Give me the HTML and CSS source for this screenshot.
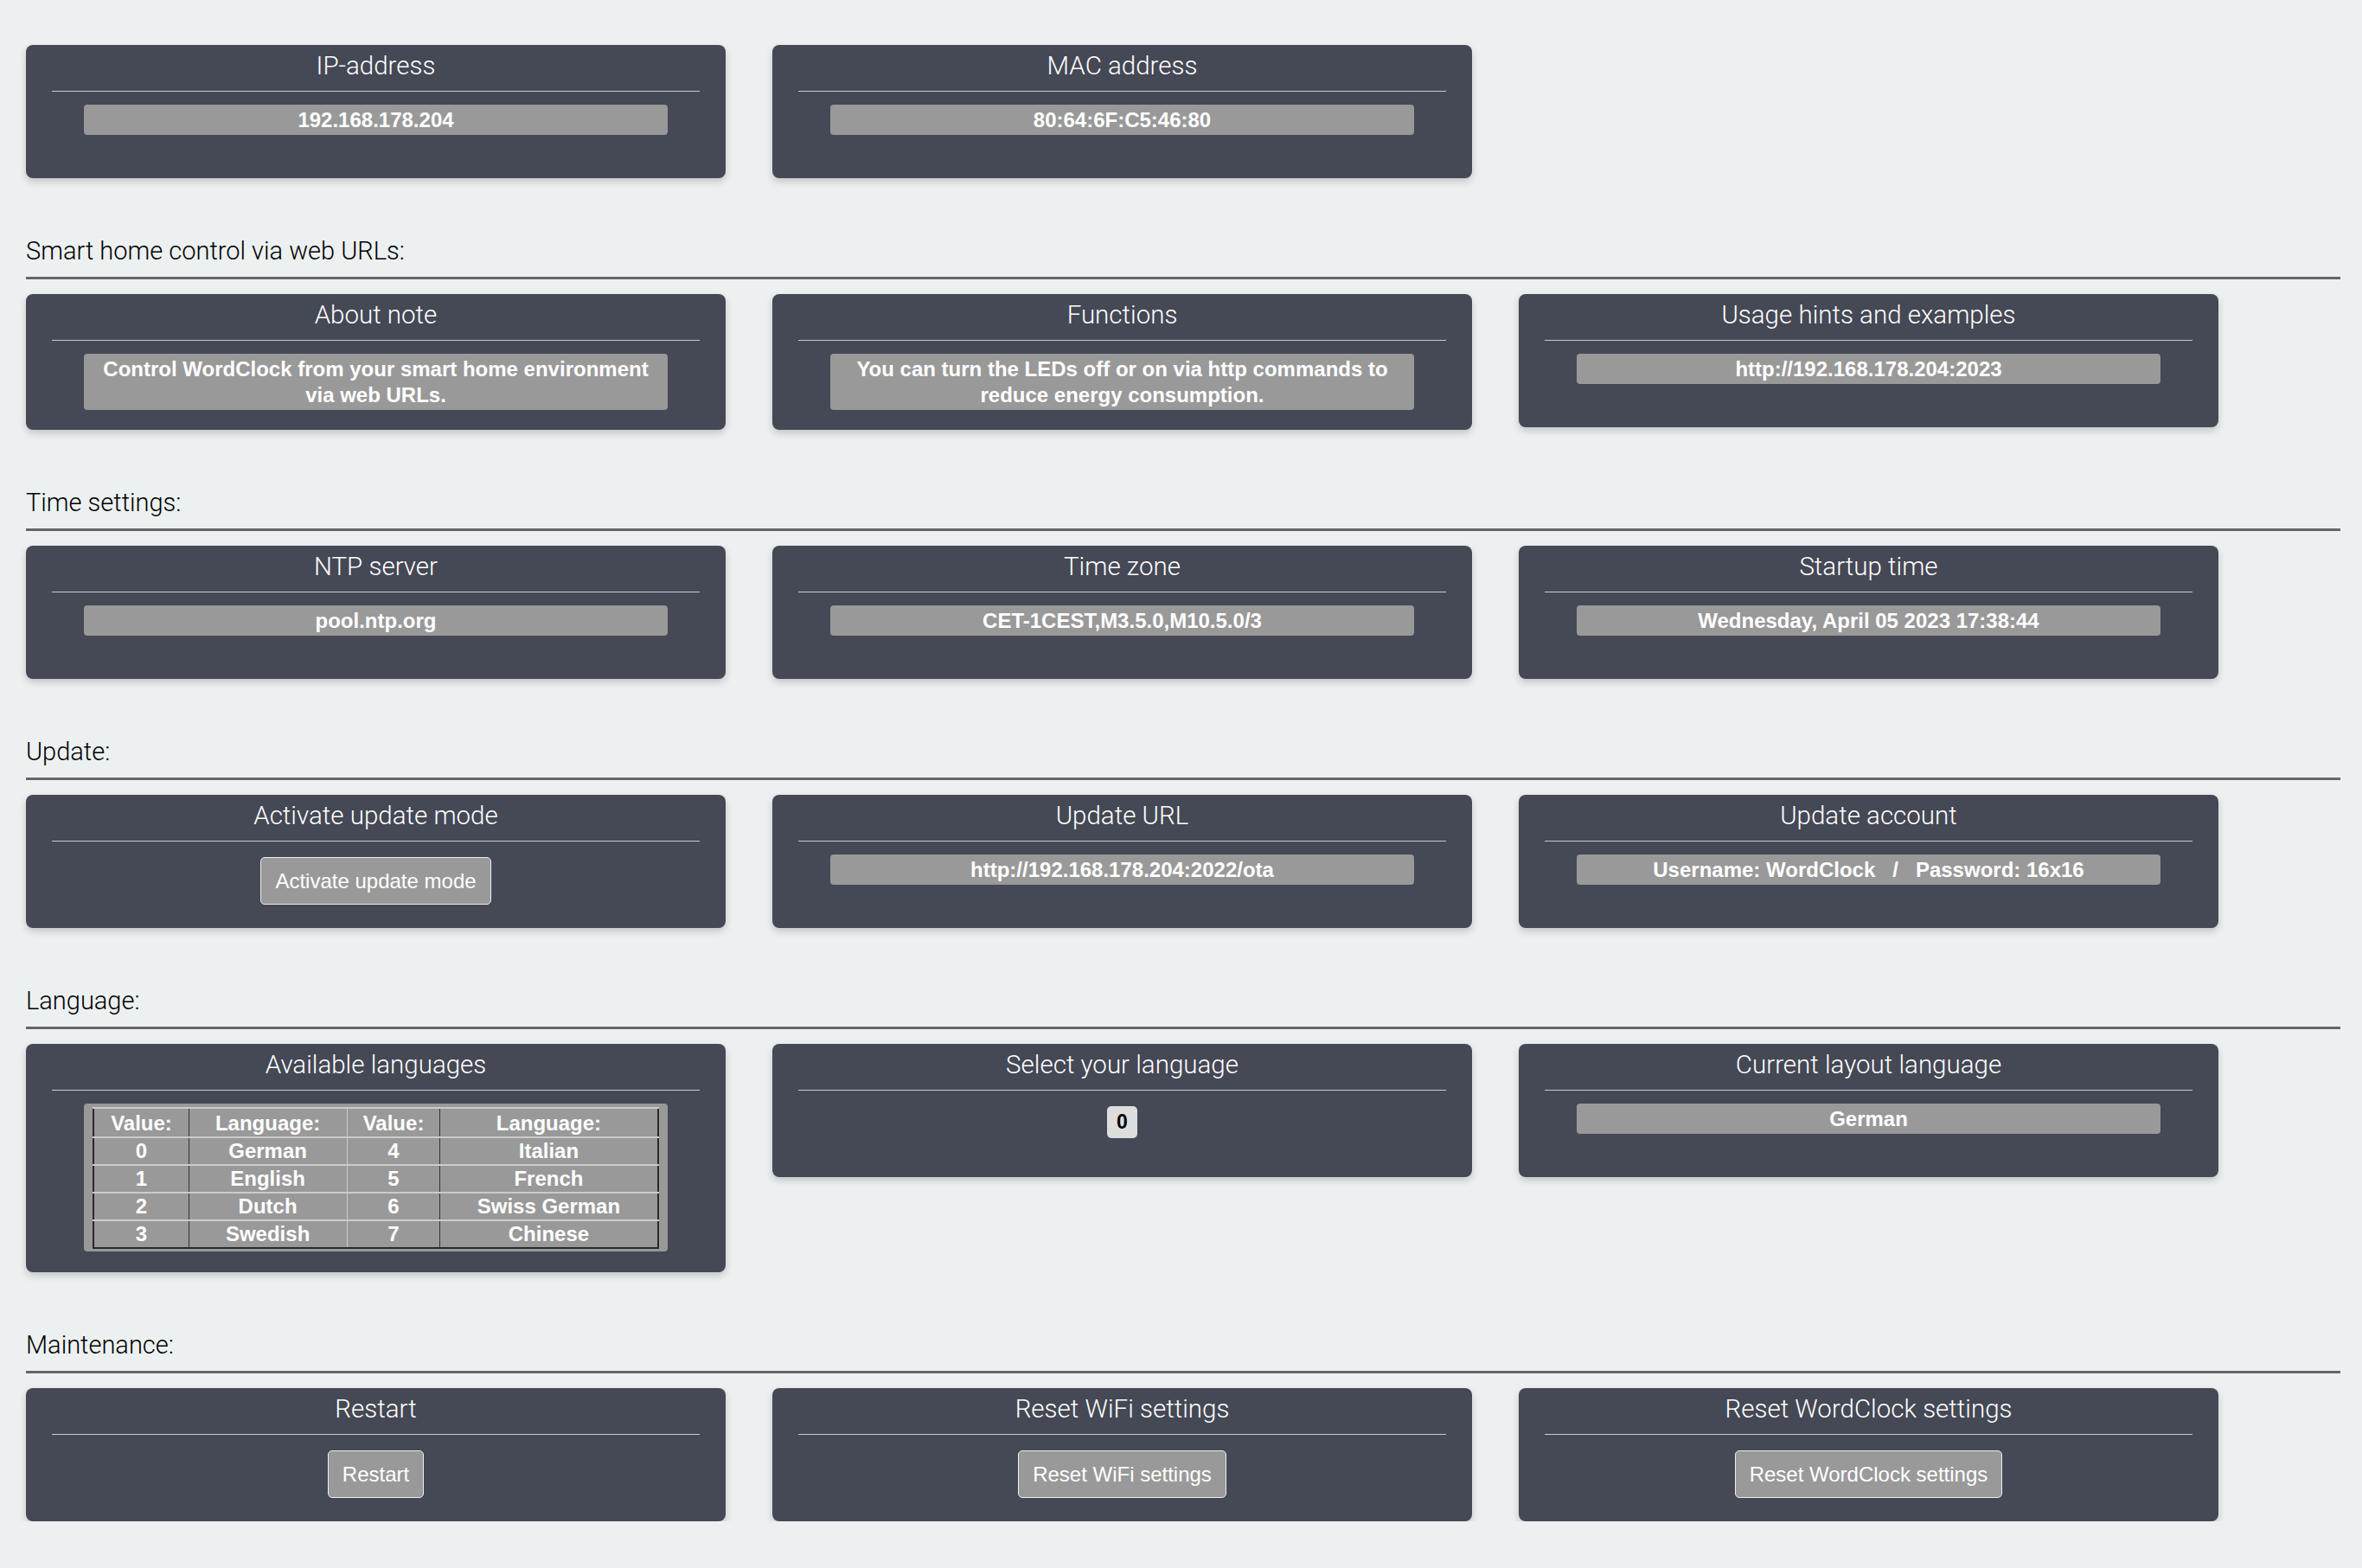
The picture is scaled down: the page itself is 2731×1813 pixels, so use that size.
FILE: index.html
```html
<!DOCTYPE html>
<html lang="en">
<head>
    <meta charset="UTF-8">
    <meta name="viewport" content="width=device-width, initial-scale=1.0">
    <title>WordClock - Settings</title>
    <link rel="stylesheet" href="styles.css">
</head>
<body>
    <div class="page">
        <!-- Network -->
        <div class="row">
            <div class="card">
                <div class="card-title">IP-address</div>
                <div class="divider"></div>
                <div class="value">192.168.178.204</div>
            </div>
            <div class="card">
                <div class="card-title">MAC address</div>
                <div class="divider"></div>
                <div class="value">80:64:6F:C5:46:80</div>
            </div>
        </div>

        <!-- Smart home -->
        <h2 class="section-title">Smart home control via web URLs:</h2>
        <div class="row">
            <div class="card">
                <div class="card-title">About note</div>
                <div class="divider"></div>
                <div class="value">Control WordClock from your smart home environment via web URLs.</div>
            </div>
            <div class="card">
                <div class="card-title">Functions</div>
                <div class="divider"></div>
                <div class="value">You can turn the LEDs off or on via http commands to reduce energy consumption.</div>
            </div>
            <div class="card">
                <div class="card-title">Usage hints and examples</div>
                <div class="divider"></div>
                <div class="value">http://192.168.178.204:2023</div>
            </div>
        </div>

        <!-- Time -->
        <h2 class="section-title">Time settings:</h2>
        <div class="row">
            <div class="card">
                <div class="card-title">NTP server</div>
                <div class="divider"></div>
                <div class="value">pool.ntp.org</div>
            </div>
            <div class="card">
                <div class="card-title">Time zone</div>
                <div class="divider"></div>
                <div class="value">CET-1CEST,M3.5.0,M10.5.0/3</div>
            </div>
            <div class="card">
                <div class="card-title">Startup time</div>
                <div class="divider"></div>
                <div class="value">Wednesday, April 05 2023 17:38:44</div>
            </div>
        </div>

        <!-- Update -->
        <h2 class="section-title">Update:</h2>
        <div class="row">
            <div class="card">
                <div class="card-title">Activate update mode</div>
                <div class="divider"></div>
                <div class="actions"><button class="btn">Activate update mode</button></div>
            </div>
            <div class="card">
                <div class="card-title">Update URL</div>
                <div class="divider"></div>
                <div class="value">http://192.168.178.204:2022/ota</div>
            </div>
            <div class="card">
                <div class="card-title">Update account</div>
                <div class="divider"></div>
                <div class="value">Username: WordClock &nbsp; / &nbsp; Password: 16x16</div>
            </div>
        </div>

        <!-- Language -->
        <h2 class="section-title">Language:</h2>
        <div class="row">
            <div class="card">
                <div class="card-title">Available languages</div>
                <div class="divider"></div>
                <div class="table-box">
                    <table class="lang-table">
                        <tr><th>Value:</th><th>Language:</th><th>Value:</th><th>Language:</th></tr>
                        <tr><td>0</td><td>German</td><td>4</td><td>Italian</td></tr>
                        <tr><td>1</td><td>English</td><td>5</td><td>French</td></tr>
                        <tr><td>2</td><td>Dutch</td><td>6</td><td>Swiss German</td></tr>
                        <tr><td>3</td><td>Swedish</td><td>7</td><td>Chinese</td></tr>
                    </table>
                </div>
            </div>
            <div class="card">
                <div class="card-title">Select your language</div>
                <div class="divider"></div>
                <div class="actions"><span class="lang-select">0</span></div>
            </div>
            <div class="card">
                <div class="card-title">Current layout language</div>
                <div class="divider"></div>
                <div class="value">German</div>
            </div>
        </div>

        <!-- Maintenance -->
        <h2 class="section-title">Maintenance:</h2>
        <div class="row">
            <div class="card">
                <div class="card-title">Restart</div>
                <div class="divider"></div>
                <div class="actions"><button class="btn">Restart</button></div>
            </div>
            <div class="card">
                <div class="card-title">Reset WiFi settings</div>
                <div class="divider"></div>
                <div class="actions"><button class="btn">Reset WiFi settings</button></div>
            </div>
            <div class="card">
                <div class="card-title">Reset WordClock settings</div>
                <div class="divider"></div>
                <div class="actions"><button class="btn">Reset WordClock settings</button></div>
            </div>
        </div>
    </div>
</body>
</html>
```

FILE: styles.css
```css
body { margin: 0; background: #ecf0f1; font-family: "Liberation Sans", Arial, sans-serif; }
.page { padding: 52px 25px 0 30px; }
.row { display: grid; grid-template-columns: repeat(3, 809px); column-gap: 54px; align-items: start; }

.section-title { margin: 67px 0 17px; padding-bottom: 13px; border-bottom: 3px solid #666; font: 300 29px/34px Roboto, "Liberation Sans", sans-serif; color: #000; }

.card { box-sizing: border-box; min-height: 154px; padding: 7px 30px 23px; background: #454855; border-radius: 8px; box-shadow: 0 4px 8px rgba(0, 0, 0, 0.18); }
.card-title { text-align: center; font: 300 29.5px/34px Roboto, "Liberation Sans", sans-serif; color: #fff; }
.divider { height: 1px; margin-top: 12px; background: #c9cad3; }

.value { width: 90%; box-sizing: border-box; margin: 15px auto 0; padding: 2.5px 10px; background: #999; border-radius: 4px; color: #fff; font-weight: bold; font-size: 24px; line-height: 30px; text-align: center; }

.actions { margin-top: 18px; text-align: center; }
.btn { padding: 12px 16px; background: #999; border: 1px solid #eee; border-radius: 5px; color: #fff; font-family: "Liberation Sans", Arial, sans-serif; font-size: 24px; line-height: 29px; cursor: pointer; }
.lang-select { display: inline-block; width: 35px; height: 37px; line-height: 37px; background: #ddd; border-radius: 5px; color: #000; font-weight: bold; font-size: 23px; }

.table-box { width: 90%; box-sizing: border-box; margin: 15px auto 1px; padding: 4px 10px 3px; background: #999; border-radius: 4px; }
.lang-table { width: 100%; border-collapse: collapse; border: 2px solid #2a2a2a; }
.lang-table th, .lang-table td { padding: 0; border-top: 2px solid #cbcbcb; border-left: 1px solid #cbcbcb; color: #fff; font-weight: bold; font-size: 24px; line-height: 30px; text-align: center; }
.lang-table th { padding-top: 2px; }
.lang-table th:nth-child(2), .lang-table td:nth-child(2), .lang-table th:nth-child(4), .lang-table td:nth-child(4) { border-left-color: #333; }
.lang-table th:nth-child(1) { width: 16.8%; }
.lang-table th:nth-child(2) { width: 28.1%; }
.lang-table th:nth-child(3) { width: 16.5%; }
```
